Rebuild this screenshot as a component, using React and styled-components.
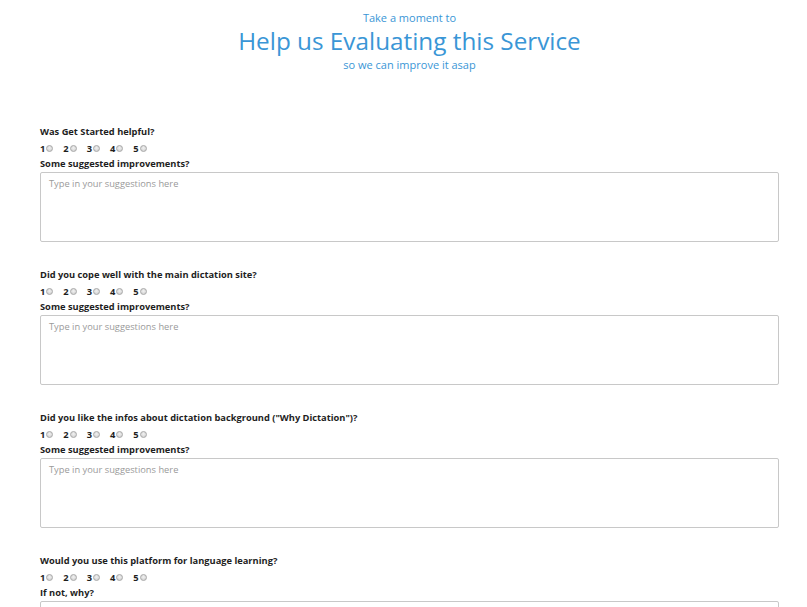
import React from "react";
import styled, { createGlobalStyle } from "styled-components";

const Global = createGlobalStyle`
  html, body { margin: 0; padding: 0; background: #fff; }
  body { font-family: "Open Sans", "DejaVu Sans", sans-serif; color: #222; }
`;

const Page = styled.div`
  padding: 0 28px 40px 40px;
`;

const Header = styled.header`
  display: flex;
  flex-direction: column;
  align-items: center;
  color: #3a96d6;
  padding-top: 10px;
  margin-bottom: 51px;
`;

const Kicker = styled.div`
  font-size: 11px;
  line-height: 16px;
`;

const Title = styled.h1`
  margin: -1px 0 1px;
  font-weight: 400;
  font-size: 24.3px;
  line-height: 31px;
`;

const Question = styled.section`
  display: flex;
  flex-direction: column;
  margin-bottom: 25px;
`;

const Label = styled.div`
  font-size: 9.3px;
  font-weight: 700;
  line-height: 16px;
  color: #1e1e1e;
`;

const Scale = styled.div`
  display: flex;
  gap: 10px;
  height: 16px;
  align-items: center;
`;

const Option = styled.label`
  display: flex;
  align-items: center;
  gap: 1px;
  font-size: 9.3px;
  font-weight: 700;
  color: #1e1e1e;
`;

const Radio = styled.span`
  display: inline-block;
  width: 7px;
  height: 7px;
  border-radius: 50%;
  border: 1px solid #a8a8a8;
  background: radial-gradient(circle at 50% 40%, #f2f2f2 0%, #d6d6d6 70%);
  box-sizing: border-box;
`;

const Area = styled.textarea`
  display: block;
  box-sizing: border-box;
  width: 100%;
  height: 70px;
  margin: 0;
  border: 1px solid #c8c8c8;
  border-radius: 2px;
  padding: 4px 8px;
  font-family: inherit;
  font-size: 9.3px;
  resize: none;
  outline: none;
  &::placeholder { color: #9a9a9a; }
`;

const questions = [
  { q: "Was Get Started helpful?", sub: "Some suggested improvements?" },
  { q: "Did you cope well with the main dictation site?", sub: "Some suggested improvements?" },
  { q: 'Did you like the infos about dictation background ("Why Dictation")?', sub: "Some suggested improvements?" },
  { q: "Would you use this platform for language learning?", sub: "If not, why?" },
];

export default function App() {
  return (
    <Page>
      <Global />
      <Header>
        <Kicker>Take a moment to</Kicker>
        <Title>Help us Evaluating this Service</Title>
        <Kicker>so we can improve it asap</Kicker>
      </Header>
      {questions.map((item, i) => (
        <Question key={i}>
          <Label>{item.q}</Label>
          <Scale>
            {[1, 2, 3, 4, 5].map((n) => (
              <Option key={n}>
                {n}
                <Radio />
              </Option>
            ))}
          </Scale>
          <Label>{item.sub}</Label>
          <Area placeholder="Type in your suggestions here" />
        </Question>
      ))}
    </Page>
  );
}
